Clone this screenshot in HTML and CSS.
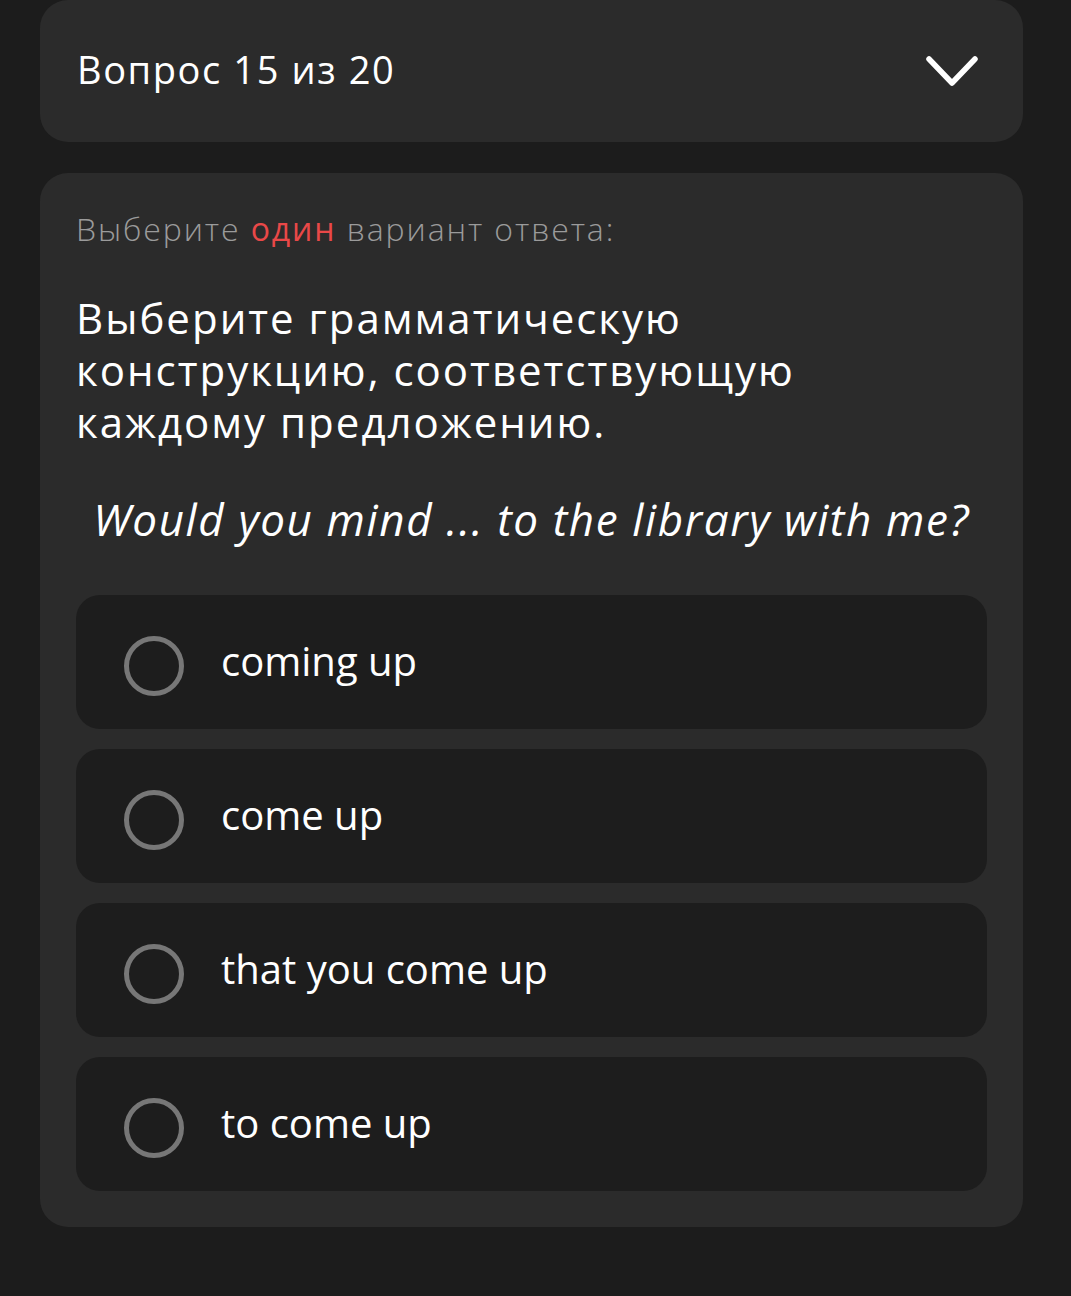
FILE: index.html
```html
<!DOCTYPE html>
<html lang="ru">
<head>
  <meta charset="UTF-8" />
  <meta name="viewport" content="width=device-width, initial-scale=1.0"/>
  <title>Тест</title>
  <link rel="stylesheet" href="styles.css">
</head>
<body>

<div class="page">
  <div class="progress">
    <span class="progress-title">Вопрос 15 из 20</span>
    <svg class="chevron" width="54" height="34" viewBox="0 0 54 34">
      <path d="M4 5 L27 29 L50 5" fill="none" stroke="#fff" stroke-width="5.5" stroke-linecap="round" stroke-linejoin="round"/>
    </svg>
  </div>

  <div class="question">
    <div class="hint">Выберите <span class="accent">один</span> вариант ответа:</div>
    <div class="task">Выберите грамматическую конструкцию, соответствующую каждому предложению.</div>
    <div class="sentence">Would you mind ... to the library with me?</div>

    <div class="options">
      <label class="option"><span class="radio"></span><span class="option-text">coming up</span></label>
      <label class="option"><span class="radio"></span><span class="option-text">come up</span></label>
      <label class="option"><span class="radio"></span><span class="option-text">that you come up</span></label>
      <label class="option"><span class="radio"></span><span class="option-text">to come up</span></label>
    </div>
  </div>
</div>

</body>
</html>
```

FILE: styles.css
```css
body {
  margin: 0;
  padding: 0;
  background: #1c1c1c;
  font-family: "Open Sans", "Noto Sans", sans-serif;
  color: #fff;
}

.page {
  padding: 0 48px 40px 40px;
  display: flex;
  flex-direction: column;
  gap: 31px;
}

.progress {
  background: #2b2b2b;
  border-radius: 28px;
  height: 142px;
  padding: 0 44px 0 37px;
  display: flex;
  align-items: center;
  justify-content: space-between;
}

.progress-title {
  font-size: 38px;
  letter-spacing: 1.6px;
  margin-bottom: 5px;
}

.chevron {
  display: block;
}

.question {
  background: #2b2b2b;
  border-radius: 28px;
  padding: 36px;
}

.hint {
  color: #9b9b9b;
  font-size: 32px;
  font-weight: 300;
  line-height: 40px;
  letter-spacing: 1.9px;
}

.accent {
  color: #e94848;
  font-weight: 400;
}

.task {
  margin-top: 43px;
  font-size: 42px;
  line-height: 52px;
  letter-spacing: 2px;
  max-width: 760px;
}

.sentence {
  margin-top: 43px;
  font-style: italic;
  font-size: 44px;
  text-align: center;
  line-height: 56px;
  letter-spacing: 1.6px;
}

.options {
  margin-top: 48px;
  display: flex;
  flex-direction: column;
  gap: 20px;
}

.option {
  background: #1d1d1d;
  border-radius: 24px;
  height: 134px;
  display: flex;
  align-items: center;
  padding-left: 48px;
}

.radio {
  width: 50px;
  height: 50px;
  border: 5px solid #777;
  border-radius: 50%;
  flex-shrink: 0;
  margin-top: 8px;
}

.option-text {
  margin-left: 37px;
  font-size: 40px;
  margin-bottom: 4px;
}
```
